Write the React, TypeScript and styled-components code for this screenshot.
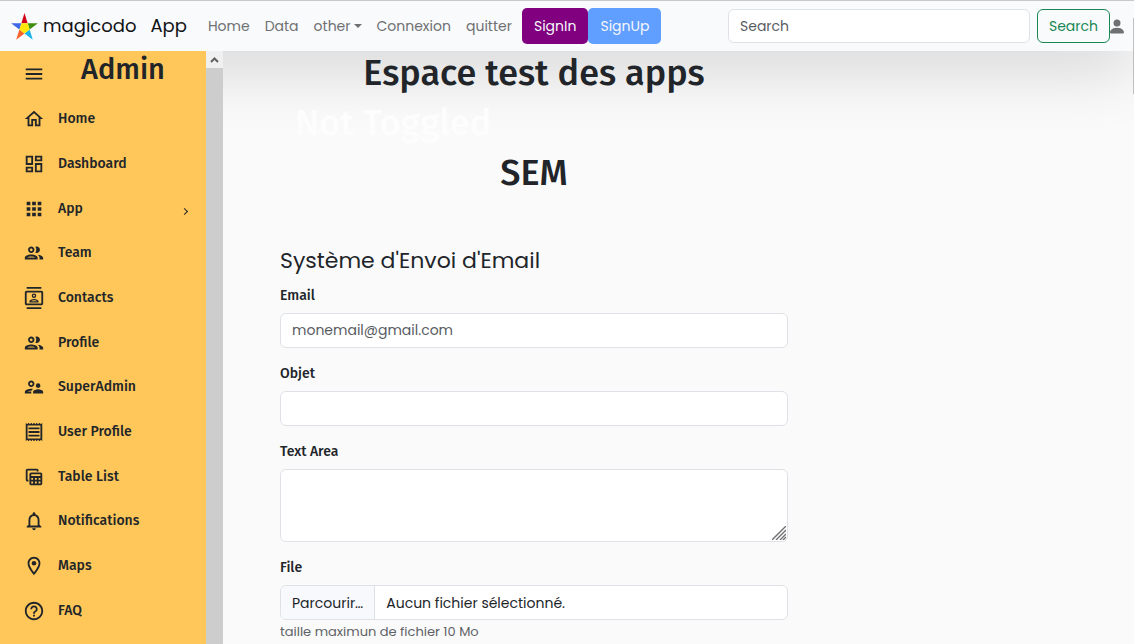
import React from 'react';
import styled, { createGlobalStyle, css } from 'styled-components';
import {
  MdMenu,
  MdOutlineHome,
  MdOutlineDashboard,
  MdApps,
  MdOutlineContacts,
  MdOutlineSupervisorAccount,
  MdOutlineReceipt,
  MdOutlineTableView,
  MdNotificationsNone,
  MdOutlineLocationOn,
  MdHelpOutline,
} from 'react-icons/md';

const bodyFont = 'Poppins, Inter, "Noto Sans", sans-serif';
const headFont = '"Fira Sans", Roboto, "Noto Sans", sans-serif';

const GlobalStyle = createGlobalStyle`
  *, *::before, *::after { box-sizing: border-box; }
  body {
    margin: 0;
    background: #fafafa;
    color: #212529;
    font: 400 14px/22px ${bodyFont};
  }
  button, input, textarea { font: inherit; color: inherit; }
  h1, h2, h3, ul { margin: 0; padding: 0; }
`;

const Page = styled.div`
  position: relative;
  display: flex;
  flex-direction: column;
  min-height: 100vh;
`;

const Navbar = styled.header`
  position: relative;
  z-index: 1;
  display: flex;
  align-items: center;
  height: 51px;
  padding: 0 10px 0 11px;
  background: #f8fafc;
  border-top: 1px solid #c9c9cc;
  box-shadow: 0 16px 64px rgba(0, 0, 10, 0.17);
`;

const Brand = styled.a`
  display: flex;
  align-items: center;
  gap: 5px;
  margin-right: 14px;
  color: #111315;
  font-size: 18px;
  line-height: 30px;
  text-decoration: none;
`;

const Logo = styled.svg`
  width: 27px;
  height: 27px;
`;

const NavList = styled.nav`
  display: flex;
  align-items: center;
  gap: 15px;
  margin: 0 10px 0 7px;
`;

const NavLink = styled.a`
  display: flex;
  align-items: center;
  gap: 3px;
  color: #6f7072;
  text-decoration: none;
`;

const Caret = styled.span`
  border: 4px solid transparent;
  border-top-color: currentColor;
  border-bottom: 0;
`;

const NavButton = styled.button<{ $tone: string }>`
  height: 36px;
  padding: 0 12px;
  border: 0;
  border-radius: 5px;
  background: ${(p) => p.$tone};
  color: #f6f7fb;
`;

const SearchForm = styled.form`
  display: flex;
  flex: 0 1 382px;
  gap: 7px;
  margin-left: auto;
`;

const field = css`
  display: block;
  width: 100%;
  border: 1px solid #dee2e6;
  border-radius: 6px;
  background: #fff;
`;

const TextField = styled.input`
  ${field}
  height: 35px;
  padding: 0 11px;
  &::placeholder { color: #595c5f; opacity: 1; }
`;

const SearchField = styled(TextField)`
  flex: 1;
  min-width: 0;
  height: 34px;
`;

const SearchButton = styled.button`
  height: 34px;
  padding: 0 11px;
  border: 1px solid #198754;
  border-radius: 6px;
  background: transparent;
  color: #198754;
`;

const UserLink = styled.a`
  display: flex;
  color: #6f7072;
`;

const Body = styled.div`
  display: flex;
  flex: 1;
`;

const Sidebar = styled.aside`
  position: relative;
  z-index: 2;
  display: flex;
  flex: none;
  width: 223px;
`;

const SidebarContent = styled.div`
  display: flex;
  flex: 1;
  flex-direction: column;
  padding-bottom: 11px;
  background: #ffc75a;
`;

const SidebarHead = styled.div`
  display: flex;
  align-items: flex-start;
  height: 46px;
  padding-left: 23px;
`;

const MenuButton = styled.button`
  display: flex;
  margin-top: 12px;
  padding: 0;
  border: 0;
  background: none;
  font-size: 22px;
`;

const SidebarTitle = styled.h2`
  margin-left: 36px;
  font: 500 29px/38px ${headFont};
`;

const Menu = styled.ul`
  display: flex;
  flex: 1;
  flex-direction: column;
  list-style: none;
`;

const MenuItem = styled.li`
  display: flex;
  flex: 1;
  min-height: 40px;
`;

const MenuLink = styled.a`
  display: flex;
  flex: 1;
  align-items: center;
  gap: 13px;
  padding: 0 17px 0 23px;
  color: #212529;
  font: 500 14px/20px ${headFont};
  text-decoration: none;
  svg { flex: none; font-size: 22px; }
`;

const Chevron = styled.span`
  width: 5px;
  height: 5px;
  margin: 5px 2px 0 auto;
  border: solid currentColor;
  border-width: 1px 1px 0 0;
  transform: rotate(45deg);
`;

const ScrollTrack = styled.div`
  display: flex;
  flex-direction: column;
  width: 17px;
  background: #cdcdcd;
`;

const ScrollUp = styled.button`
  display: flex;
  align-items: center;
  justify-content: center;
  height: 17px;
  padding: 0;
  border: 0;
  background: #f0f0f0;
  color: #606060;
`;

const Main = styled.main`
  position: relative;
  flex: 1;
  min-width: 0;
  padding-top: 1px;
`;

const Column = styled.div`
  max-width: 622px;
  padding: 0 57px;
`;

const Heading = styled.h1<{ $ghost?: boolean }>`
  position: relative;
  z-index: 2;
  margin-bottom: 7px;
  font: 500 36px/43px ${headFont};
  text-align: center;
  ${(p) =>
    p.$ghost &&
    css`
      padding-left: 15px;
      color: #fdfdfd;
      text-align: left;
    `}
`;

const MailForm = styled.form`
  display: flex;
  flex-direction: column;
  gap: 15px;
  padding-top: 46px;
`;

const FormTitle = styled.h3`
  margin-bottom: -3px;
  font-size: 22px;
  font-weight: 400;
  line-height: 25px;
`;

const Group = styled.div`
  display: flex;
  flex-direction: column;
`;

const FieldLabel = styled.label`
  margin-bottom: 6px;
  font: 500 14px/22px ${headFont};
`;

const AreaWrap = styled.div`
  position: relative;
`;

const TextBox = styled.textarea`
  ${field}
  height: 73px;
  padding: 6px 11px;
  resize: none;
`;

const Grip = styled.svg`
  position: absolute;
  right: 2px;
  bottom: 2px;
  width: 14px;
  height: 14px;
`;

const FilePicker = styled.label`
  ${field}
  position: relative;
  display: flex;
  height: 35px;
  overflow: hidden;
  line-height: 34px;
`;

const HiddenFile = styled.input`
  position: absolute;
  width: 1px;
  height: 1px;
  opacity: 0;
`;

const FileButton = styled.span`
  padding: 0 11px;
  border-right: 1px solid #dee2e6;
  background: #f8f9fc;
`;

const FileName = styled.span`
  padding: 0 11px;
`;

const Help = styled.small`
  margin-top: 2px;
  color: #5e6266;
  font-size: 13px;
  line-height: 19px;
`;

const PageScroll = styled.div`
  position: absolute;
  z-index: 3;
  top: 18px;
  right: 0;
  width: 1px;
  height: 76px;
  background: #bfbfc2;
`;

const PeopleIcon = () => (
  <svg width="1em" height="1em" viewBox="0 0 24 24" fill="currentColor" aria-hidden="true">
    <path d="M9 13.75c-2.34 0-7 1.17-7 3.5V19h14v-1.75c0-2.33-4.66-3.5-7-3.5zM4.34 17c.84-.58 2.87-1.25 4.66-1.25s3.82.67 4.66 1.25H4.34zM9 12c1.93 0 3.5-1.57 3.5-3.5S10.93 5 9 5 5.5 6.57 5.5 8.5 7.07 12 9 12zm0-5c.83 0 1.5.67 1.5 1.5S9.83 10 9 10s-1.5-.67-1.5-1.5S8.17 7 9 7zm7.04 6.81c1.16.84 1.96 1.96 1.96 3.44V19h4v-1.75c0-2.02-3.5-3.17-5.96-3.44zM15 12c1.93 0 3.5-1.57 3.5-3.5S16.93 5 15 5c-.54 0-1.04.13-1.5.35.63.89 1 1.98 1 3.15s-.37 2.26-1 3.15c.46.22.96.35 1.5.35z" />
  </svg>
);

const PersonIcon = () => (
  <svg width="14" height="15" viewBox="2 2 12 12" fill="currentColor" aria-hidden="true">
    <path d="M3 14s-1 0-1-1 1-4 6-4 6 3 6 4-1 1-1 1zM8 8a3 3 0 1 0 0-6 3 3 0 0 0 0 6" />
  </svg>
);

const items: { label: string; icon: React.ComponentType; nested?: boolean }[] = [
  { label: 'Home', icon: MdOutlineHome },
  { label: 'Dashboard', icon: MdOutlineDashboard },
  { label: 'App', icon: MdApps, nested: true },
  { label: 'Team', icon: PeopleIcon },
  { label: 'Contacts', icon: MdOutlineContacts },
  { label: 'Profile', icon: PeopleIcon },
  { label: 'SuperAdmin', icon: MdOutlineSupervisorAccount },
  { label: 'User Profile', icon: MdOutlineReceipt },
  { label: 'Table List', icon: MdOutlineTableView },
  { label: 'Notifications', icon: MdNotificationsNone },
  { label: 'Maps', icon: MdOutlineLocationOn },
  { label: 'FAQ', icon: MdHelpOutline },
];

const StarLogo = () => (
  <Logo viewBox="2 0 96 91" preserveAspectRatio="none" aria-hidden="true">
    <path fill="#d0021b" d="M50 0 61.2 34.6 38.8 34.6z" />
    <path fill="#3f8f0c" d="M97.6 34.6 68.2 55.9 61.2 34.6z" />
    <path fill="#17b4ea" d="M79.4 90.5 50 69.1 68.2 55.9z" />
    <path fill="#f9622b" d="M20.6 90.5 31.8 55.9 50 69.1z" />
    <path fill="#3f66e8" d="M2.4 34.6 38.8 34.6 31.8 55.9z" />
    <path fill="#ffe70a" d="M38.8 34.6H61.2L68.2 55.9 50 69.1 31.8 55.9z" />
  </Logo>
);

export default function App() {
  return (
    <Page>
      <GlobalStyle />
      <Navbar>
        <Brand href="#">
          <StarLogo />
          magicodo
        </Brand>
        <Brand href="#">App</Brand>
        <NavList>
          <NavLink href="#">Home</NavLink>
          <NavLink href="#">Data</NavLink>
          <NavLink href="#">
            other
            <Caret />
          </NavLink>
          <NavLink href="#">Connexion</NavLink>
          <NavLink href="#">quitter</NavLink>
        </NavList>
        <NavButton $tone="#800080">SignIn</NavButton>
        <NavButton $tone="#609eff">SignUp</NavButton>
        <SearchForm>
          <SearchField type="search" placeholder="Search" aria-label="Search" />
          <SearchButton type="button">Search</SearchButton>
        </SearchForm>
        <UserLink href="#" aria-label="Account">
          <PersonIcon />
        </UserLink>
      </Navbar>
      <Body>
        <Sidebar>
          <SidebarContent>
            <SidebarHead>
              <MenuButton aria-label="Menu">
                <MdMenu />
              </MenuButton>
              <SidebarTitle>Admin</SidebarTitle>
            </SidebarHead>
            <Menu>
              {items.map(({ label, icon: Icon, nested }) => (
                <MenuItem key={label}>
                  <MenuLink href="#">
                    <Icon />
                    {label}
                    {nested && <Chevron />}
                  </MenuLink>
                </MenuItem>
              ))}
            </Menu>
          </SidebarContent>
          <ScrollTrack>
            <ScrollUp aria-label="Scroll up">
              <svg width="9" height="6" viewBox="0 0 9 6">
                <path d="M1 5 4.5 1.5 8 5" fill="none" stroke="currentColor" strokeWidth="2" />
              </svg>
            </ScrollUp>
          </ScrollTrack>
        </Sidebar>
        <Main>
          <Column>
            <Heading>Espace test des apps</Heading>
            <Heading as="h2" $ghost>
              Not Toggled
            </Heading>
            <Heading as="h2">SEM</Heading>
            <MailForm>
              <FormTitle>Système d'Envoi d'Email</FormTitle>
              <Group>
                <FieldLabel htmlFor="email">Email</FieldLabel>
                <TextField id="email" type="email" placeholder="monemail@gmail.com" />
              </Group>
              <Group>
                <FieldLabel htmlFor="subject">Objet</FieldLabel>
                <TextField id="subject" type="text" />
              </Group>
              <Group>
                <FieldLabel htmlFor="message">Text Area</FieldLabel>
                <AreaWrap>
                  <TextBox id="message" />
                  <Grip viewBox="0 0 14 14" aria-hidden="true">
                    <path
                      d="M0 14 14 0M4 14 14 4M8 14 14 8M11 14 14 11"
                      stroke="#707070"
                      strokeWidth="1.4"
                      fill="none"
                    />
                  </Grip>
                </AreaWrap>
              </Group>
              <Group>
                <FieldLabel htmlFor="file">File</FieldLabel>
                <FilePicker>
                  <HiddenFile id="file" type="file" />
                  <FileButton>Parcourir…</FileButton>
                  <FileName>Aucun fichier sélectionné.</FileName>
                </FilePicker>
                <Help>taille maximun de fichier 10 Mo</Help>
              </Group>
            </MailForm>
          </Column>
        </Main>
      </Body>
      <PageScroll />
    </Page>
  );
}
